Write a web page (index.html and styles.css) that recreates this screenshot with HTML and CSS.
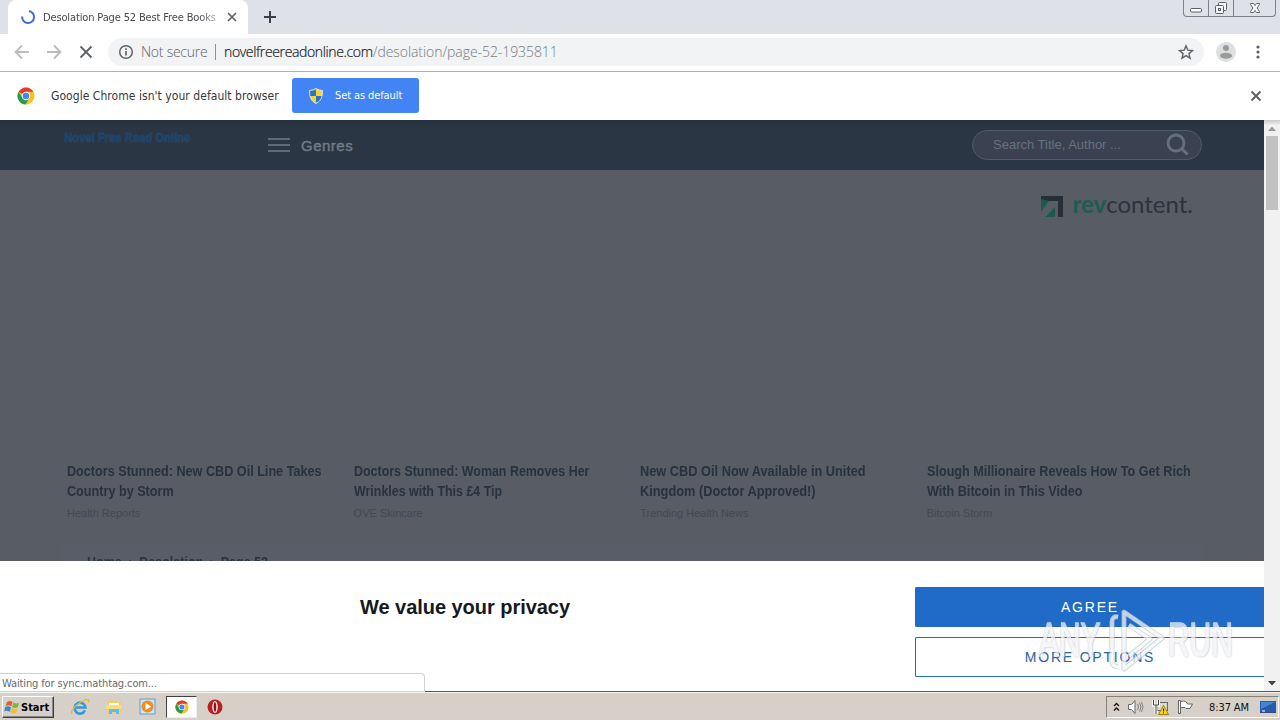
FILE: index.html
```html
<!DOCTYPE html>
<html lang="en">
<head>
<meta charset="utf-8">
<title>Desolation Page 52 Best Free Books</title>
<link rel="stylesheet" href="styles.css">
</head>
<body>
<div class="desktop">
  <header class="tabstrip">
    <div class="tab">
      <svg class="spinner" width="16" height="16" viewBox="0 0 16 16"><path d="M9 2.100A6 6 0 1 1 2.100 7.500" fill="none" stroke="#3c6fdc" stroke-width="2"/></svg>
      <span class="tab-title">Desolation Page 52 Best Free Books</span>
      <svg width="10" height="10" viewBox="0 0 10 10"><path d="M1 1l8 8M9 1l-8 8" stroke="#5f6368" stroke-width="1.700"/></svg>
    </div>
    <svg class="new-tab" width="12" height="12" viewBox="0 0 12 12"><path d="M6 0v12M0 6h12" stroke="#3c4043" stroke-width="2"/></svg>
    <div class="window-buttons">
      <span class="wb"><svg width="13" height="15" viewBox="0 0 13 15"><rect x=".5" y="8.500" width="11" height="3.500" rx="1" fill="#fff" stroke="#5c606b"/></svg></span>
      <span class="wb"><svg width="14" height="15" viewBox="0 0 14 15"><g fill="#f4f5f7" stroke="#5c606b"><rect x="4.500" y="2.500" width="8" height="8" rx="1"/><rect x="1.500" y="5.500" width="8" height="8" rx="1"/><rect x="4.500" y="8.500" width="2" height="2"/></g></svg></span>
      <span class="wb wb-close"><svg width="14" height="15" viewBox="0 0 14 15"><path d="M2.500 3.500h3l1.500 2 1.500-2h3v1L9 8l2.500 3.500v1h-3L7 10.500l-1.500 2h-3v-1L5 8 2.500 4.500z" fill="#fff" stroke="#5c606b"/></svg></span>
    </div>
  </header>

  <nav class="toolbar">
    <svg width="16" height="16" viewBox="0 0 16 16"><path d="M15 8H2M8 1.500L1.500 8 8 14.500" fill="none" stroke="#babcbe" stroke-width="1.800"/></svg>
    <svg width="16" height="16" viewBox="0 0 16 16"><path d="M1 8h13M8 1.500L14.500 8 8 14.500" fill="none" stroke="#babcbe" stroke-width="1.800"/></svg>
    <svg width="16" height="16" viewBox="0 0 16 16"><path d="M2.500 2.500l11 11M13.500 2.500l-11 11" stroke="#5f6368" stroke-width="1.900"/></svg>
    <div class="omnibox">
      <svg width="16" height="16" viewBox="0 0 16 16"><circle cx="8" cy="8" r="6.300" fill="none" stroke="#5f6368" stroke-width="1.500"/><path d="M8 7v4.500M8 4.300v1.700" stroke="#5f6368" stroke-width="1.700"/></svg>
      <span class="not-secure">Not secure</span>
      <span class="divider"></span>
      <span class="host">novelfreereadonline.com</span><span class="path">/desolation/page-52-1935811</span>
      <svg class="star" width="16" height="16" viewBox="0 0 16 16"><path d="M8 1.800l1.800 4.300 4.700.4-3.600 3.100 1.100 4.600L8 11.700l-4 2.500 1.100-4.600L1.500 6.500l4.700-.4z" fill="none" stroke="#5f6368" stroke-width="1.400"/></svg>
    </div>
    <svg class="avatar" width="20" height="20" viewBox="0 0 20 20"><circle cx="10" cy="10" r="10" fill="#dedfe0"/><circle cx="10" cy="6" r="3" fill="#9b9b9b"/><ellipse cx="10" cy="13.700" rx="6" ry="3" fill="#9b9b9b"/></svg>
    <svg class="more" width="4" height="16" viewBox="0 0 4 16" fill="#5f6368"><circle cx="2" cy="3" r="1.600"/><circle cx="2" cy="8" r="1.600"/><circle cx="2" cy="13" r="1.600"/></svg>
  </nav>

  <section class="infobar">
    <svg class="chrome" width="18" height="18" viewBox="0 0 18 18"><circle cx="9" cy="9" r="8.500" fill="#fbc116"/><path d="M9 9L1.640 4.750A8.500 8.500 0 0 1 16.360 4.750H9z" fill="#e33b2e"/><path d="M1.640 4.750A8.500 8.500 0 0 0 8.500 17.480L12.500 11 9 9 5.500 11z" fill="#279b4b"/><circle cx="9" cy="9" r="4.200" fill="#fff"/><circle cx="9" cy="9" r="3.300" fill="#4285f4"/></svg>
    <span class="info-text">Google Chrome isn't your default browser</span>
    <button class="set-default">
      <svg width="14" height="16" viewBox="0 0 14 16"><path d="M7 .5Q10 2.500 13.500 2.500C13.500 9 12 13 7 15.500 2 13 .5 9 .5 2.500Q4 2.500 7 .5z" fill="#fbd72b" stroke="#dfe3e8"/><path d="M7 1.200V8H1.300Q1 6 1 3 4.500 3 7 1.200zM7 8h5.700Q11.500 13 7 14.800z" fill="#2b75c9"/></svg>
      <span>Set as default</span>
    </button>
    <svg class="dismiss" width="12" height="12" viewBox="0 0 12 12"><path d="M1.500 1.500l9 9M10.500 1.500l-9 9" stroke="#5f6368" stroke-width="2"/></svg>
  </section>

  <main class="viewport">
    <div class="page">
      <div class="site-header">
        <span class="site-logo">Novel Free Read Online</span>
        <svg class="burger" width="22" height="16" viewBox="0 0 22 16"><path d="M0 2h22M0 8h22M0 14h22" stroke="#5f6a78" stroke-width="2"/></svg>
        <span class="genres">Genres</span>
        <div class="search">
          <span class="search-text">Search Title, Author ...</span>
          <svg width="24" height="24" viewBox="0 0 24 24"><circle cx="10" cy="11" r="8" fill="none" stroke="#66707c" stroke-width="2.800"/><path d="M15.500 16.500l6 6" stroke="#66707c" stroke-width="3"/></svg>
        </div>
      </div>
      <div class="sponsor">
        <svg width="22" height="22" viewBox="0 0 22 22"><path d="M0 1h22v21h-5V6H0z" fill="#262e39"/><path d="M0 4l8 2-8 11zM4 22L14 12v10z" fill="#1d5a4d"/></svg>
        <span class="brand"><span class="rev">rev</span>content.</span>
      </div>
      <div class="ads">
        <article class="ad"><h3>Doctors Stunned: New CBD Oil Line Takes<br>Country by Storm</h3><p>Health Reports</p></article>
        <article class="ad"><h3>Doctors Stunned: Woman Removes Her<br>Wrinkles with This £4 Tip</h3><p>OVE Skincare</p></article>
        <article class="ad"><h3>New CBD Oil Now Available in United<br>Kingdom (Doctor Approved!)</h3><p>Trending Health News</p></article>
        <article class="ad"><h3>Slough Millionaire Reveals How To Get Rich<br>With Bitcoin in This Video</h3><p>Bitcoin Storm</p></article>
      </div>
      <div class="crumbs"><div class="trail"><span>Home</span><i>›</i><span>Desolation</span><i>›</i><span>Page 52</span></div></div>
      <div class="consent">
        <h2>We value your privacy</h2>
        <div class="consent-actions">
          <button class="agree">AGREE</button>
          <button class="options">MORE OPTIONS</button>
        </div>
      </div>
    </div>
    <aside class="scrollbar">
      <svg width="16" height="16" viewBox="0 0 16 16"><path d="M4 11l4-4.500L12 11z" fill="#999"/></svg>
      <div class="thumb"></div>
      <svg class="down" width="16" height="16" viewBox="0 0 16 16"><path d="M4 6l4 4.500L12 6z" fill="#404040"/></svg>
    </aside>
    <div class="status">Waiting for sync.mathtag.com...</div>
    <div class="watermark">
      <span class="wm-text">ANY</span>
      <svg width="58" height="64" viewBox="0 0 58 64" fill="none" stroke-linejoin="round"><path d="M17 3L55 29 17 60V3zM22 16L43 30 22 47M11 8Q5 7 5 13V52Q5 57 11 58" stroke="#b9bec5" stroke-width="5"/><path d="M17 3L55 29 17 60V3zM22 16L43 30 22 47M11 8Q5 7 5 13V52Q5 57 11 58" stroke="#f4f6f8" stroke-width="3.500"/></svg>
      <span class="wm-text">RUN</span>
    </div>
  </main>

  <footer class="taskbar">
    <div class="start">
      <svg width="16" height="16" viewBox="0 0 16 16"><path d="M3 3q3-2 5.500 0L7.300 7.500Q5 5.500 1.500 7z" fill="#e5602c"/><path d="M9.300 3.500Q12 5.300 15 3.800L13.800 8.300Q11 9.800 8.100 8z" fill="#7db83e"/><path d="M1.200 8Q4.500 6.500 7 8.400L5.800 13Q3 11 .2 12.500z" fill="#3c87cf"/><path d="M7.800 9Q10.800 10.700 13.500 9.300L12.300 13.800Q9 15.500 6.600 13.500z" fill="#f5bd2d"/></svg>
      <b>Start</b>
    </div>
    <svg class="ie" width="20" height="18" viewBox="0 0 20 18"><path d="M15 12.500A5.500 5.500 0 1 1 15.500 9.500H6" fill="none" stroke="#3498dc" stroke-width="2.600"/><path d="M2 16C-1 11 16-1 18.500 2c.7 1-.3 2.500-.3 2.500" fill="none" stroke="#e6b83c" stroke-width="1.300"/></svg>
    <svg class="folder" width="18" height="18" viewBox="0 0 18 18"><path d="M2 4l2-2h5l1 1h6v12H2z" fill="#edce6e"/><path d="M4 5h10v3H4z" fill="#fffbe3"/><path d="M1 7h15v4H1z" fill="#f5df8d"/><path d="M4 16v-5h10v5h-3v-2H7v2z" fill="#63bce5"/></svg>
    <svg class="player" width="18" height="18" viewBox="0 0 18 18"><rect x="1" y="1" width="15" height="15" fill="#c9e4f6" stroke="#5b9fce"/><circle cx="8.500" cy="8.500" r="6" fill="#f18d1c"/><path d="M6.500 5v7l6-3.500z" fill="#fff"/></svg>
    <div class="task-active"><svg width="14" height="14" viewBox="0 0 18 18"><circle cx="9" cy="9" r="8.500" fill="#fbc116"/><path d="M9 9L1.640 4.750A8.500 8.500 0 0 1 16.360 4.750H9z" fill="#e33b2e"/><path d="M1.640 4.750A8.500 8.500 0 0 0 8.500 17.480L12.500 11 9 9 5.500 11z" fill="#279b4b"/><circle cx="9" cy="9" r="4.200" fill="#fff"/><circle cx="9" cy="9" r="3.300" fill="#4285f4"/></svg></div>
    <svg class="opera" width="16" height="16" viewBox="0 0 16 16"><circle cx="8" cy="8" r="7.500" fill="#b81f21"/><ellipse cx="8" cy="8" rx="2.800" ry="6" fill="#f7dddd"/><ellipse cx="8" cy="8" rx="1.200" ry="4.800" fill="#8e1215"/></svg>
    <div class="tray">
      <svg width="7" height="10" viewBox="0 0 7 10"><path d="M1 4l2.500-2.500L6 4M1 8.500L3.500 6 6 8.500" fill="none" stroke="#111" stroke-width="1.300"/></svg>
      <svg width="18" height="16" viewBox="0 0 18 16"><path d="M1.500 5.500h3L8 1.500v13l-3.500-4h-3z" fill="#fff" stroke="#6b6b6b"/><path d="M10.500 5q2 3 0 6M12.500 3.500q3 4.500 0 9M14.500 3q3 5 0 10" fill="none" stroke="#84817c"/></svg>
      <svg width="18" height="16" viewBox="0 0 18 16"><rect x="5.500" y="3.500" width="10" height="8" fill="#d7d8d8" stroke="#666"/><path d="M1.500 1v5h5V1M4 6v9" fill="none" stroke="#fff" stroke-width="3"/><path d="M1.500 1v5h5V1M4 6v9" fill="none" stroke="#444"/><path d="M11.500 6.500l5 9h-10z" fill="#ffd51c" stroke="#9f7e08"/><path d="M11.500 9.500v3M11.500 13.300v1" stroke="#111"/></svg>
      <svg width="18" height="16" viewBox="0 0 18 16"><path d="M1.500 1.500h2v13h-2zM3.500 2.500q3-1 5 0 2 1.500 2 2.500h5l-2.500 4.500h-4l-1-1h-4.500z" fill="#fff" stroke="#666"/></svg>
      <span class="clock">8:37 AM</span>
      <svg width="16" height="14" viewBox="0 0 16 14"><path d="M0 1h16v11H0z" fill="#255cae"/><path d="M1 2h14L1 9z" fill="#4585cf"/><path d="M0 12h16v1H0z" fill="#334b72"/><path d="M2 11h3" stroke="#fff"/></svg>
    </div>
  </footer>
</div>
</body>
</html>
```
FILE: styles.css
```css
* { box-sizing: border-box; }
body { margin: 0; font-family: "Noto Sans", sans-serif; }
svg { display: block; flex: none; }
button { padding: 0; border: 0; font: inherit; }
.desktop { width: 1280px; height: 720px; display: flex; flex-direction: column; overflow: hidden; white-space: nowrap; background: #fff; }

.tabstrip { height: 34px; flex: none; display: flex; background: #dee1e8; padding-left: 8px; }
.tab { width: 240px; height: 34px; display: flex; align-items: center; padding-left: 12px; background: #fff; border-radius: 8px 8px 0 0; }
.tab-title { width: 174px; margin: 0 10px 0 7px; overflow: hidden; font-family: "DejaVu Sans Condensed", "DejaVu Sans", sans-serif; font-size: 11px; letter-spacing: -.14px; color: #45484c; -webkit-mask-image: linear-gradient(90deg, #000 90%, transparent 106%); }
.new-tab { margin: 11px 0 0 16px; }
.window-buttons { margin: 0 4px 0 auto; height: 17px; display: flex; border: 1px solid #7d818c; border-top: 0; border-radius: 0 0 4px 4px; }
.wb { width: 25px; display: flex; justify-content: center; border-right: 1px solid #7d818c; }
.wb-close { width: 41px; border: 0; }

.toolbar { height: 38px; flex: none; display: flex; align-items: center; gap: 16px; padding: 0 20px 1px 14px; border-bottom: 1px solid #afb1b3; }
.omnibox { width: 1096px; height: 28px; margin-left: -2px; display: flex; align-items: center; padding: 0 10px 1px; border-radius: 14px; background: #f1f3f5; font-family: "Open Sans", sans-serif; font-size: 14px; font-weight: 300; }
.not-secure { margin-left: 7px; color: #5f6368; width: 67px; letter-spacing: -.25px; }
.divider { width: 1px; height: 16px; margin: 0 8px 0 7px; background: #8e9195; }
.host { color: #202124; letter-spacing: -.36px; -webkit-text-stroke: .2px #202124; }
.path { color: #777b80; letter-spacing: -.07px; }
.star { margin-left: auto; }
.avatar { margin-left: -4px; }
.more { margin-left: 4px; }

.infobar { height: 48px; flex: none; display: flex; align-items: center; padding: 0 18px 1px 17px; }
.info-text { width: 228px; margin: 0 13px 0 16px; font-family: "DejaVu Sans Condensed", "DejaVu Sans", sans-serif; font-size: 12px; letter-spacing: .05px; color: #35373a; }
.set-default { width: 127px; height: 35px; display: flex; align-items: center; padding-left: 17px; gap: 12px; background: #4284f4; border-radius: 3px; color: #fff; font-family: "DejaVu Sans Condensed", "DejaVu Sans", sans-serif; font-size: 11px; letter-spacing: -.1px; }
.dismiss { margin-left: auto; }

.viewport { position: relative; height: 572px; flex: none; display: flex; border-bottom: 1px solid #555; }
.page { width: 1264px; display: flex; flex-direction: column; background: #575c65; font-family: "Liberation Sans", Arial, sans-serif; overflow: hidden; }
.site-header { height: 50px; flex: none; display: flex; align-items: center; padding: 0 62px 0 64px; background: linear-gradient(#25313a, #2b3645 8px); }
.site-logo { width: 204px; padding-bottom: 15px; font-weight: 700; font-size: 13px; color: #224568; -webkit-text-stroke: .9px #224568; transform: scaleX(.865); transform-origin: left; }
.genres { margin: 1px 0 0 11px; font-size: 15px; letter-spacing: .5px; color: #737b86; -webkit-text-stroke: .4px #737b86; }
.search { width: 230px; height: 30px; margin-left: auto; display: flex; align-items: center; justify-content: space-between; padding: 0 11px 2px 20px; border: 1px solid #505b69; border-radius: 15px; background: #3a4251; color: #68717d; font-size: 13px; }
.sponsor { height: 70px; flex: none; display: flex; justify-content: flex-end; align-items: center; padding: 2px 71px 0 0; gap: 9px; color: #2c333e; }
.brand { font-family: Lato, sans-serif; font-size: 24px; line-height: 28px; padding-bottom: 4px; }
.rev { color: #1f5b50; font-weight: 700; }
.ads { height: 305px; flex: none; display: grid; grid-template-columns: repeat(4, 286.600px); align-items: end; padding-left: 67px; padding-bottom: 24px; }
.ad h3 { margin: 0; width: max-content; font-size: 15px; line-height: 20px; color: #273240; font-weight: 700; transform: scaleX(.842); transform-origin: left; }
.ad:nth-child(2) h3 { transform: scaleX(.829); }
.ad:nth-child(3) h3 { transform: scaleX(.852); }
.ad p { margin: 4px 0 0; font-size: 11px; line-height: 16px; color: #434951; }
.crumbs { height: 16px; flex: none; margin: 0 61px; padding: 8px 0 0 26px; background: #585d67; overflow: hidden; font-size: 15px; line-height: 17px; font-weight: 700; color: #2b3441; }
.trail { display: flex; gap: 8px; transform: scaleX(.834); transform-origin: left; }
.crumbs i { font-style: normal; }
.consent { height: 131px; flex: none; display: flex; background: #fff; }
.consent h2 { width: 555px; margin: 34px 0 0 360px; font-size: 20px; line-height: 24px; color: #14191d; letter-spacing: -.04px; }
.consent-actions { width: 349px; padding-top: 26px; display: flex; flex-direction: column; gap: 10px; }
.consent button { height: 40px; flex: none; font-size: 14px; letter-spacing: 1.800px; text-align: center; border: 1px solid #1f6ac5; border-right: 0; border-radius: 2px 0 0 2px; }
.consent .agree { background: #206bc7; color: #fff; }
.consent .options { background: #fff; color: #2a62a8; }
.scrollbar { width: 16px; display: flex; flex-direction: column; align-items: center; background: linear-gradient(#c8c8c8, #f1f1f1 5px); }
.thumb { width: 12px; height: 74px; background: #c1c1c1; }
.down { margin-top: auto; }
.status { position: absolute; left: 0; bottom: -1px; width: 425px; height: 19px; padding-left: 2px; border: 1px solid #d2d2d2; border-left: 0; border-radius: 0 4px 0 0; background: #fff; color: #67696b; font-family: "DejaVu Sans Condensed", "DejaVu Sans", sans-serif; font-size: 11px; line-height: 19px; letter-spacing: -.12px; }
.watermark { position: absolute; left: 1039px; top: 489px; display: flex; align-items: center; gap: 3px; opacity: .75; }
.wm-text { font-family: "Liberation Sans", Arial, sans-serif; font-size: 49px; line-height: 46px; padding-bottom: 4px; width: 65px; color: #f3f4f6; -webkit-text-stroke: 1.500px #f3f4f6; text-shadow: 0 0 3px #959ba4, 1px 1px 2px #b5bac2; transform: scaleX(.61); transform-origin: left; }

.taskbar { height: 28px; flex: none; display: flex; align-items: center; background: #d6d0c8; border-top: 1px solid #f7f5f0; padding: 1px 0 0 2px; }
.start { width: 52px; height: 22px; display: flex; align-items: center; gap: 1px; padding-left: 1px; border: 1px solid; border-color: #fff #404040 #404040 #fff; box-shadow: inset -1px -1px #888; font-family: "DejaVu Sans Condensed", "DejaVu Sans", sans-serif; font-size: 11px; color: #000; }
.ie { margin-left: 16px; }
.folder { margin-left: 15px; }
.player { margin-left: 16px; }
.task-active { width: 31px; height: 22px; margin-left: 9px; display: grid; place-items: center; background: #fff; border: 1px solid; border-color: #404040 #eee #eee #404040; }
.opera { margin-left: 10px; }
.tray { width: 173px; height: 22px; margin: 0 1px 0 auto; display: flex; align-items: center; padding-left: 6px; gap: 7px; border: 1px solid; border-color: #858078 #fff #fff #858078; }
.clock { width: 42px; margin: 0 2px 0 7px; font-family: "DejaVu Sans Condensed", "DejaVu Sans", sans-serif; font-size: 11px; letter-spacing: -.1px; color: #111; }
```
